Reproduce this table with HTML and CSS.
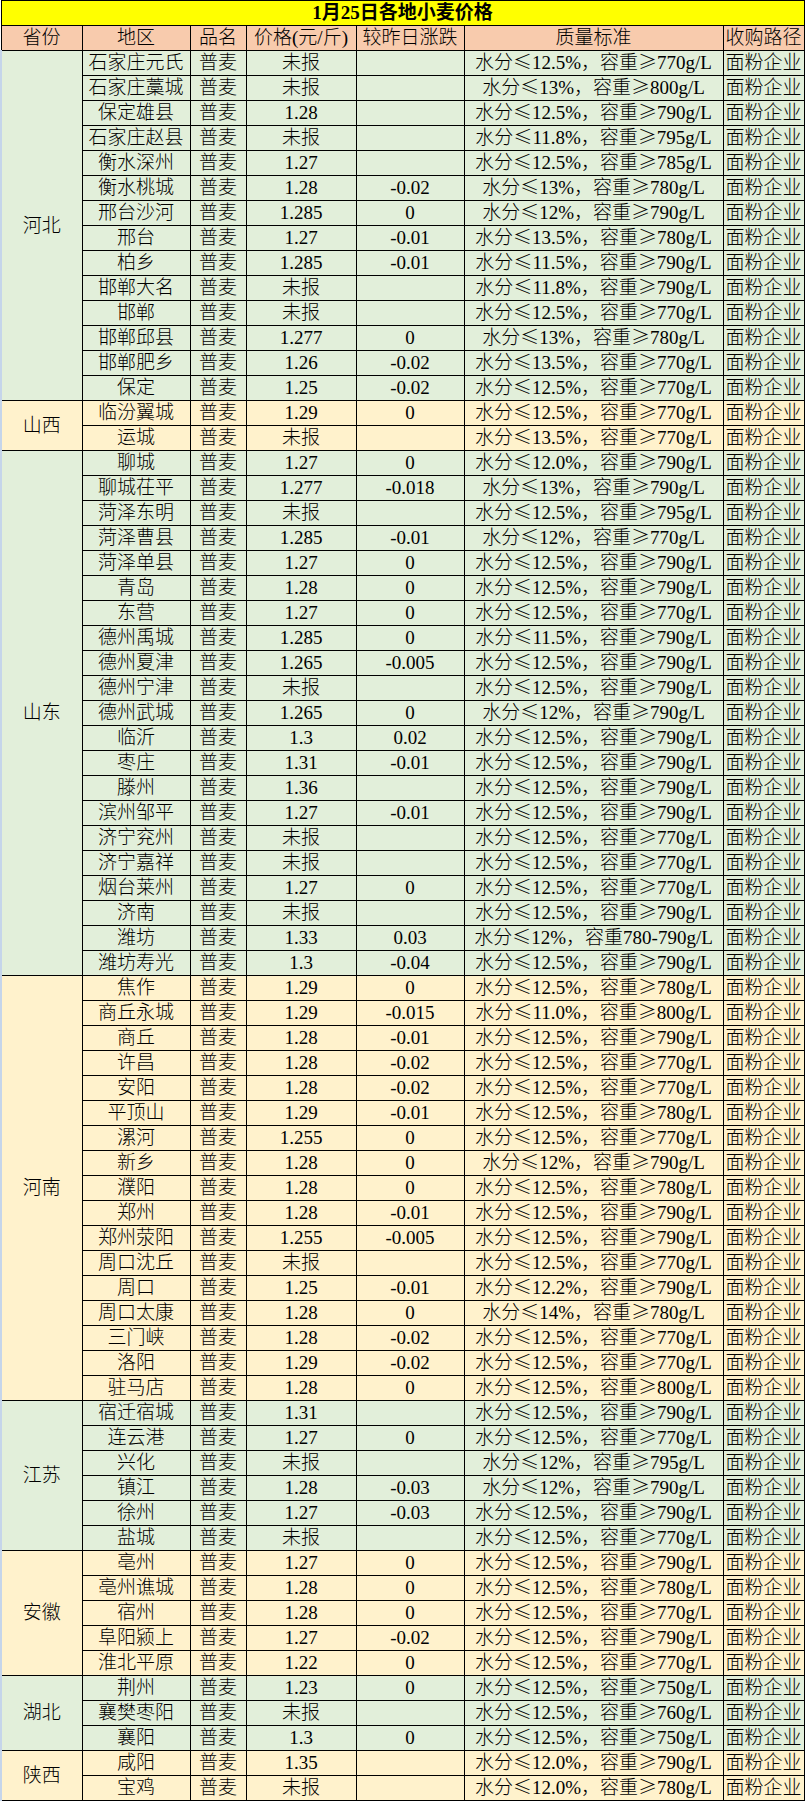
FILE: index.html
```html
<!DOCTYPE html>
<html lang="zh-CN">
<head>
<meta charset="utf-8">
<title>1月25日各地小麦价格</title>
<link rel="stylesheet" href="styles.css">
</head>
<body>
<table class="sheet">
<colgroup>
<col class="c-prov"><col class="c-area"><col class="c-kind"><col class="c-price"><col class="c-chg"><col class="c-std"><col class="c-way">
</colgroup>
<thead>
<tr class="title"><td colspan="7">1月25日各地小麦价格</td></tr>
<tr class="head"><td>省份</td><td>地区</td><td>品名</td><td>价格(元/斤)</td><td>较昨日涨跌</td><td>质量标准</td><td>收购路径</td></tr>
</thead>
<tbody class="green">
<tr><td class="prov" rowspan="14">河北</td><td>石家庄元氏</td><td>普麦</td><td>未报</td><td></td><td>水分<i>≤</i>12.5%，容重<i>≥</i>770g/L</td><td>面粉企业</td></tr>
<tr><td>石家庄藁城</td><td>普麦</td><td>未报</td><td></td><td>水分<i>≤</i>13%，容重<i>≥</i>800g/L</td><td>面粉企业</td></tr>
<tr><td>保定雄县</td><td>普麦</td><td>1.28</td><td></td><td>水分<i>≤</i>12.5%，容重<i>≥</i>790g/L</td><td>面粉企业</td></tr>
<tr><td>石家庄赵县</td><td>普麦</td><td>未报</td><td></td><td>水分<i>≤</i>11.8%，容重<i>≥</i>795g/L</td><td>面粉企业</td></tr>
<tr><td>衡水深州</td><td>普麦</td><td>1.27</td><td></td><td>水分<i>≤</i>12.5%，容重<i>≥</i>785g/L</td><td>面粉企业</td></tr>
<tr><td>衡水桃城</td><td>普麦</td><td>1.28</td><td>-0.02</td><td>水分<i>≤</i>13%，容重<i>≥</i>780g/L</td><td>面粉企业</td></tr>
<tr><td>邢台沙河</td><td>普麦</td><td>1.285</td><td>0</td><td>水分<i>≤</i>12%，容重<i>≥</i>790g/L</td><td>面粉企业</td></tr>
<tr><td>邢台</td><td>普麦</td><td>1.27</td><td>-0.01</td><td>水分<i>≤</i>13.5%，容重<i>≥</i>780g/L</td><td>面粉企业</td></tr>
<tr><td>柏乡</td><td>普麦</td><td>1.285</td><td>-0.01</td><td>水分<i>≤</i>11.5%，容重<i>≥</i>790g/L</td><td>面粉企业</td></tr>
<tr><td>邯郸大名</td><td>普麦</td><td>未报</td><td></td><td>水分<i>≤</i>11.8%，容重<i>≥</i>790g/L</td><td>面粉企业</td></tr>
<tr><td>邯郸</td><td>普麦</td><td>未报</td><td></td><td>水分<i>≤</i>12.5%，容重<i>≥</i>770g/L</td><td>面粉企业</td></tr>
<tr><td>邯郸邱县</td><td>普麦</td><td>1.277</td><td>0</td><td>水分<i>≤</i>13%，容重<i>≥</i>780g/L</td><td>面粉企业</td></tr>
<tr><td>邯郸肥乡</td><td>普麦</td><td>1.26</td><td>-0.02</td><td>水分<i>≤</i>13.5%，容重<i>≥</i>770g/L</td><td>面粉企业</td></tr>
<tr><td>保定</td><td>普麦</td><td>1.25</td><td>-0.02</td><td>水分<i>≤</i>12.5%，容重<i>≥</i>770g/L</td><td>面粉企业</td></tr>
</tbody>
<tbody class="yellow">
<tr><td class="prov" rowspan="2">山西</td><td>临汾翼城</td><td>普麦</td><td>1.29</td><td>0</td><td>水分<i>≤</i>12.5%，容重<i>≥</i>770g/L</td><td>面粉企业</td></tr>
<tr><td>运城</td><td>普麦</td><td>未报</td><td></td><td>水分<i>≤</i>13.5%，容重<i>≥</i>770g/L</td><td>面粉企业</td></tr>
</tbody>
<tbody class="green">
<tr><td class="prov" rowspan="21">山东</td><td>聊城</td><td>普麦</td><td>1.27</td><td>0</td><td>水分<i>≤</i>12.0%，容重<i>≥</i>790g/L</td><td>面粉企业</td></tr>
<tr><td>聊城茌平</td><td>普麦</td><td>1.277</td><td>-0.018</td><td>水分<i>≤</i>13%，容重<i>≥</i>790g/L</td><td>面粉企业</td></tr>
<tr><td>菏泽东明</td><td>普麦</td><td>未报</td><td></td><td>水分<i>≤</i>12.5%，容重<i>≥</i>795g/L</td><td>面粉企业</td></tr>
<tr><td>菏泽曹县</td><td>普麦</td><td>1.285</td><td>-0.01</td><td>水分<i>≤</i>12%，容重<i>≥</i>770g/L</td><td>面粉企业</td></tr>
<tr><td>菏泽单县</td><td>普麦</td><td>1.27</td><td>0</td><td>水分<i>≤</i>12.5%，容重<i>≥</i>790g/L</td><td>面粉企业</td></tr>
<tr><td>青岛</td><td>普麦</td><td>1.28</td><td>0</td><td>水分<i>≤</i>12.5%，容重<i>≥</i>790g/L</td><td>面粉企业</td></tr>
<tr><td>东营</td><td>普麦</td><td>1.27</td><td>0</td><td>水分<i>≤</i>12.5%，容重<i>≥</i>770g/L</td><td>面粉企业</td></tr>
<tr><td>德州禹城</td><td>普麦</td><td>1.285</td><td>0</td><td>水分<i>≤</i>11.5%，容重<i>≥</i>790g/L</td><td>面粉企业</td></tr>
<tr><td>德州夏津</td><td>普麦</td><td>1.265</td><td>-0.005</td><td>水分<i>≤</i>12.5%，容重<i>≥</i>790g/L</td><td>面粉企业</td></tr>
<tr><td>德州宁津</td><td>普麦</td><td>未报</td><td></td><td>水分<i>≤</i>12.5%，容重<i>≥</i>790g/L</td><td>面粉企业</td></tr>
<tr><td>德州武城</td><td>普麦</td><td>1.265</td><td>0</td><td>水分<i>≤</i>12%，容重<i>≥</i>790g/L</td><td>面粉企业</td></tr>
<tr><td>临沂</td><td>普麦</td><td>1.3</td><td>0.02</td><td>水分<i>≤</i>12.5%，容重<i>≥</i>790g/L</td><td>面粉企业</td></tr>
<tr><td>枣庄</td><td>普麦</td><td>1.31</td><td>-0.01</td><td>水分<i>≤</i>12.5%，容重<i>≥</i>790g/L</td><td>面粉企业</td></tr>
<tr><td>滕州</td><td>普麦</td><td>1.36</td><td></td><td>水分<i>≤</i>12.5%，容重<i>≥</i>790g/L</td><td>面粉企业</td></tr>
<tr><td>滨州邹平</td><td>普麦</td><td>1.27</td><td>-0.01</td><td>水分<i>≤</i>12.5%，容重<i>≥</i>790g/L</td><td>面粉企业</td></tr>
<tr><td>济宁兖州</td><td>普麦</td><td>未报</td><td></td><td>水分<i>≤</i>12.5%，容重<i>≥</i>770g/L</td><td>面粉企业</td></tr>
<tr><td>济宁嘉祥</td><td>普麦</td><td>未报</td><td></td><td>水分<i>≤</i>12.5%，容重<i>≥</i>770g/L</td><td>面粉企业</td></tr>
<tr><td>烟台莱州</td><td>普麦</td><td>1.27</td><td>0</td><td>水分<i>≤</i>12.5%，容重<i>≥</i>770g/L</td><td>面粉企业</td></tr>
<tr><td>济南</td><td>普麦</td><td>未报</td><td></td><td>水分<i>≤</i>12.5%，容重<i>≥</i>790g/L</td><td>面粉企业</td></tr>
<tr><td>潍坊</td><td>普麦</td><td>1.33</td><td>0.03</td><td>水分<i>≤</i>12%，容重780-790g/L</td><td>面粉企业</td></tr>
<tr><td>潍坊寿光</td><td>普麦</td><td>1.3</td><td>-0.04</td><td>水分<i>≤</i>12.5%，容重<i>≥</i>790g/L</td><td>面粉企业</td></tr>
</tbody>
<tbody class="yellow">
<tr><td class="prov" rowspan="17">河南</td><td>焦作</td><td>普麦</td><td>1.29</td><td>0</td><td>水分<i>≤</i>12.5%，容重<i>≥</i>780g/L</td><td>面粉企业</td></tr>
<tr><td>商丘永城</td><td>普麦</td><td>1.29</td><td>-0.015</td><td>水分<i>≤</i>11.0%，容重<i>≥</i>800g/L</td><td>面粉企业</td></tr>
<tr><td>商丘</td><td>普麦</td><td>1.28</td><td>-0.01</td><td>水分<i>≤</i>12.5%，容重<i>≥</i>790g/L</td><td>面粉企业</td></tr>
<tr><td>许昌</td><td>普麦</td><td>1.28</td><td>-0.02</td><td>水分<i>≤</i>12.5%，容重<i>≥</i>770g/L</td><td>面粉企业</td></tr>
<tr><td>安阳</td><td>普麦</td><td>1.28</td><td>-0.02</td><td>水分<i>≤</i>12.5%，容重<i>≥</i>770g/L</td><td>面粉企业</td></tr>
<tr><td>平顶山</td><td>普麦</td><td>1.29</td><td>-0.01</td><td>水分<i>≤</i>12.5%，容重<i>≥</i>780g/L</td><td>面粉企业</td></tr>
<tr><td>漯河</td><td>普麦</td><td>1.255</td><td>0</td><td>水分<i>≤</i>12.5%，容重<i>≥</i>770g/L</td><td>面粉企业</td></tr>
<tr><td>新乡</td><td>普麦</td><td>1.28</td><td>0</td><td>水分<i>≤</i>12%，容重<i>≥</i>790g/L</td><td>面粉企业</td></tr>
<tr><td>濮阳</td><td>普麦</td><td>1.28</td><td>0</td><td>水分<i>≤</i>12.5%，容重<i>≥</i>780g/L</td><td>面粉企业</td></tr>
<tr><td>郑州</td><td>普麦</td><td>1.28</td><td>-0.01</td><td>水分<i>≤</i>12.5%，容重<i>≥</i>790g/L</td><td>面粉企业</td></tr>
<tr><td>郑州荥阳</td><td>普麦</td><td>1.255</td><td>-0.005</td><td>水分<i>≤</i>12.5%，容重<i>≥</i>790g/L</td><td>面粉企业</td></tr>
<tr><td>周口沈丘</td><td>普麦</td><td>未报</td><td></td><td>水分<i>≤</i>12.5%，容重<i>≥</i>770g/L</td><td>面粉企业</td></tr>
<tr><td>周口</td><td>普麦</td><td>1.25</td><td>-0.01</td><td>水分<i>≤</i>12.2%，容重<i>≥</i>790g/L</td><td>面粉企业</td></tr>
<tr><td>周口太康</td><td>普麦</td><td>1.28</td><td>0</td><td>水分<i>≤</i>14%，容重<i>≥</i>780g/L</td><td>面粉企业</td></tr>
<tr><td>三门峡</td><td>普麦</td><td>1.28</td><td>-0.02</td><td>水分<i>≤</i>12.5%，容重<i>≥</i>770g/L</td><td>面粉企业</td></tr>
<tr><td>洛阳</td><td>普麦</td><td>1.29</td><td>-0.02</td><td>水分<i>≤</i>12.5%，容重<i>≥</i>770g/L</td><td>面粉企业</td></tr>
<tr><td>驻马店</td><td>普麦</td><td>1.28</td><td>0</td><td>水分<i>≤</i>12.5%，容重<i>≥</i>800g/L</td><td>面粉企业</td></tr>
</tbody>
<tbody class="green">
<tr><td class="prov" rowspan="6">江苏</td><td>宿迁宿城</td><td>普麦</td><td>1.31</td><td></td><td>水分<i>≤</i>12.5%，容重<i>≥</i>790g/L</td><td>面粉企业</td></tr>
<tr><td>连云港</td><td>普麦</td><td>1.27</td><td>0</td><td>水分<i>≤</i>12.5%，容重<i>≥</i>770g/L</td><td>面粉企业</td></tr>
<tr><td>兴化</td><td>普麦</td><td>未报</td><td></td><td>水分<i>≤</i>12%，容重<i>≥</i>795g/L</td><td>面粉企业</td></tr>
<tr><td>镇江</td><td>普麦</td><td>1.28</td><td>-0.03</td><td>水分<i>≤</i>12%，容重<i>≥</i>790g/L</td><td>面粉企业</td></tr>
<tr><td>徐州</td><td>普麦</td><td>1.27</td><td>-0.03</td><td>水分<i>≤</i>12.5%，容重<i>≥</i>790g/L</td><td>面粉企业</td></tr>
<tr><td>盐城</td><td>普麦</td><td>未报</td><td></td><td>水分<i>≤</i>12.5%，容重<i>≥</i>770g/L</td><td>面粉企业</td></tr>
</tbody>
<tbody class="yellow">
<tr><td class="prov" rowspan="5">安徽</td><td>亳州</td><td>普麦</td><td>1.27</td><td>0</td><td>水分<i>≤</i>12.5%，容重<i>≥</i>790g/L</td><td>面粉企业</td></tr>
<tr><td>亳州谯城</td><td>普麦</td><td>1.28</td><td>0</td><td>水分<i>≤</i>12.5%，容重<i>≥</i>780g/L</td><td>面粉企业</td></tr>
<tr><td>宿州</td><td>普麦</td><td>1.28</td><td>0</td><td>水分<i>≤</i>12.5%，容重<i>≥</i>770g/L</td><td>面粉企业</td></tr>
<tr><td>阜阳颍上</td><td>普麦</td><td>1.27</td><td>-0.02</td><td>水分<i>≤</i>12.5%，容重<i>≥</i>790g/L</td><td>面粉企业</td></tr>
<tr><td>淮北平原</td><td>普麦</td><td>1.22</td><td>0</td><td>水分<i>≤</i>12.5%，容重<i>≥</i>770g/L</td><td>面粉企业</td></tr>
</tbody>
<tbody class="green">
<tr><td class="prov" rowspan="3">湖北</td><td>荆州</td><td>普麦</td><td>1.23</td><td>0</td><td>水分<i>≤</i>12.5%，容重<i>≥</i>750g/L</td><td>面粉企业</td></tr>
<tr><td>襄樊枣阳</td><td>普麦</td><td>未报</td><td></td><td>水分<i>≤</i>12.5%，容重<i>≥</i>760g/L</td><td>面粉企业</td></tr>
<tr><td>襄阳</td><td>普麦</td><td>1.3</td><td>0</td><td>水分<i>≤</i>12.5%，容重<i>≥</i>750g/L</td><td>面粉企业</td></tr>
</tbody>
<tbody class="yellow">
<tr><td class="prov" rowspan="2">陕西</td><td>咸阳</td><td>普麦</td><td>1.35</td><td></td><td>水分<i>≤</i>12.0%，容重<i>≥</i>790g/L</td><td>面粉企业</td></tr>
<tr><td>宝鸡</td><td>普麦</td><td>未报</td><td></td><td>水分<i>≤</i>12.0%，容重<i>≥</i>780g/L</td><td>面粉企业</td></tr>
</tbody>
</table>
</body>
</html>
```

FILE: styles.css
```css
html, body {
  margin: 0;
  padding: 0;
  background: #ffffff;
}

.sheet {
  border-collapse: collapse;
  table-layout: fixed;
  width: 803px;
  font-family: "Liberation Serif", "Noto Sans CJK SC", serif;
  font-size: 19px;
  font-weight: 300;
  color: #000000;
}

.c-prov { width: 81px; }
.c-area { width: 108px; }
.c-kind { width: 56px; }
.c-price { width: 110px; }
.c-chg { width: 108px; }
.c-std { width: 259px; }
.c-way { width: 81px; }

.sheet td {
  border: 1px solid #000000;
  height: 24px;
  padding: 0;
  line-height: 24px;
  text-align: center;
  vertical-align: middle;
  white-space: nowrap;
}

.sheet td i {
  font-style: normal;
  font-family: "Noto Sans CJK SC", sans-serif;
  display: inline-block;
  width: 1em;
  line-height: 1;
  vertical-align: baseline;
  text-align: center;
}

.title td {
  background: #ffff00;
  font-weight: 700;
  font-size: 19px;
}

.head td {
  background: #f8cbad;
}

.green td {
  background: #e2efda;
}

.yellow td {
  background: #fff2cc;
}

.sheet td.prov {
  border-left: 2px solid #c5d5ea;
}
```
